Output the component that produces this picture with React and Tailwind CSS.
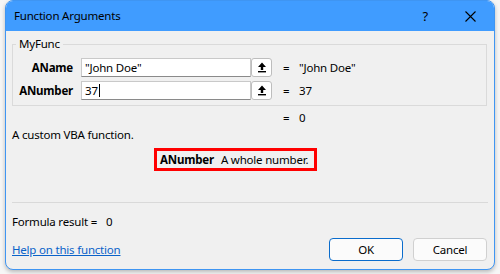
import React from 'react';

const font = { fontFamily: '"Noto Sans", "Open Sans", sans-serif' };

const CollapseIcon = () => (
  <svg width="10" height="11" viewBox="0 0 10 11">
    <path d="M5 0.5 L9 5 L6.2 5 L6.2 8 L3.8 8 L3.8 5 L1 5 Z" fill="#000" />
    <rect x="1" y="9" width="8" height="1.4" fill="#000" />
  </svg>
);

const ArgRow = ({ label, value, result, caret }) => (
  <div className="flex items-center h-[19px] whitespace-nowrap">
    <div className="w-[60px] text-right font-bold text-black">{label}</div>
    <div className="ml-[8px] flex h-[19px] w-[170px] items-center border border-[#c9c9c9] border-b-[#8a8a8a] bg-white pl-[3px] text-black">
      {value}
      {caret && <span className="ml-[1px] inline-block h-[13px] w-px bg-black" />}
    </div>
    <button className="flex h-[19px] w-[21px] items-center justify-center rounded-[3px] border border-[#bdbdbd] bg-white">
      <CollapseIcon />
    </button>
    <span className="ml-[11px] w-[16px] text-black">=</span>
    <span className="text-black">{result}</span>
  </div>
);

export default function App() {
  return (
    <div className="w-[500px] h-[274px] bg-[#f6f6f6] pl-[5px] text-[11.5px] leading-[16px] tracking-[-0.2px]" style={font}>
      <div className="w-[490px] h-[270px] flex flex-col overflow-hidden rounded-t-[8px] rounded-b-[8px] border border-[#3f95f2] bg-[#f0f0f0] shadow-[0_2px_4px_rgba(0,0,0,0.25)]">
        {/* title bar */}
        <div className="flex h-[30px] shrink-0 items-center bg-[#409cff] pl-[8px] pr-[18px]">
          <span className="text-[11.5px] text-black">Function Arguments</span>
          <span className="ml-auto text-[13px] text-black">?</span>
          <svg className="ml-[37px]" width="11" height="11" viewBox="0 0 11 11">
            <path d="M0.5 0.5 L10.5 10.5 M10.5 0.5 L0.5 10.5" stroke="#000" strokeWidth="1.1" />
          </svg>
        </div>

        {/* arguments group */}
        <fieldset className="ml-[6px] mt-[5px] w-[475px] border border-[#dadada] pb-[5px] pt-[6px]">
          <legend className="ml-[3px] px-[3px] text-black">MyFunc</legend>
          <div className="flex flex-col gap-[4px]">
            <ArgRow label="AName" value={'"John Doe"'} result={'"John Doe"'} />
            <ArgRow label="ANumber" value="37" result="37" caret />
          </div>
        </fieldset>

        <div className="mt-[4px] flex h-[16px] items-center pl-[277px] text-black">
          <span className="w-[16px]">=</span>
          <span>0</span>
        </div>

        <div className="ml-[6px] mt-px h-[16px] text-black">A custom VBA function.</div>

        <div className="ml-[148px] mt-[5px] flex h-[23px] w-[163px] items-center whitespace-nowrap border-[3px] border-[#ff0000] pl-[3px] text-black">
          <span className="font-bold">ANumber</span>
          <span className="ml-[7px]">A whole number.</span>
        </div>

        <div className="mx-[6px] mt-[31px] h-px bg-[#d9d9d9]" />

        <div className="ml-[6px] mt-[11px] flex h-[16px] items-center text-black">
          <span>Formula result =</span>
          <span className="ml-[9px]">0</span>
        </div>

        <div className="mt-[8px] flex items-center pl-[6px] pr-[7px]">
          <a href="#" className="text-[#0a62c9] underline">Help on this function</a>
          <button className="ml-auto h-[23px] w-[74px] rounded-[4px] border border-[#0a6ccc] bg-[#fbfbfb] text-black">OK</button>
          <button className="ml-[10px] h-[23px] w-[74px] rounded-[4px] border border-[#d0d0d0] bg-[#fbfbfb] text-black">Cancel</button>
        </div>
      </div>
    </div>
  );
}
